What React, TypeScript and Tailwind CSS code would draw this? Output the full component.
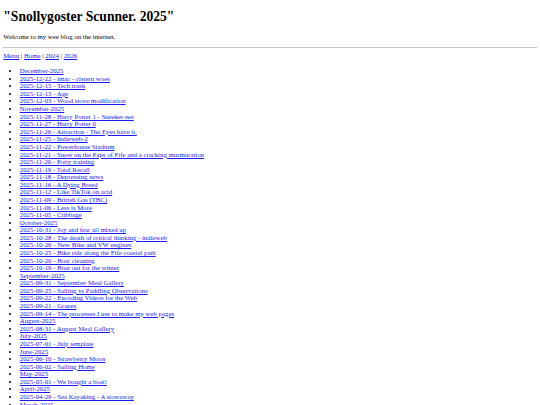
import React from "react";

const items: string[] = [
  "December-2025",
  "2025-12-22 - imac - cistern woes",
  "2025-12-15 - Tech trash",
  "2025-12-13 - Age",
  "2025-12-03 - Wood stove modification",
  "November-2025",
  "2025-11-28 - Harry Potter 1 - Sneeker-net",
  "2025-11-27 - Harry Potter 0",
  "2025-11-26 - Attraction - The Eyes have it.",
  "2025-11-25 - Indieweb-2",
  "2025-11-22 - Powerhouse Stadium",
  "2025-11-21 - Snow on the Paps of Fife and a cracking murmuration",
  "2025-11-20 - Potty training",
  "2025-11-19 - Total Recall",
  "2025-11-18 - Depressing news",
  "2025-11-16 - A Dying Breed",
  "2025-11-12 - Like TikTok on acid",
  "2025-11-09 - British Gas (TBC)",
  "2025-11-06 - Less is More",
  "2025-11-05 - Cribbage",
  "October-2025",
  "2025-10-31 - Joy and fear all mixed up",
  "2025-10-28 - The death of critical thinking - indieweb",
  "2025-10-26 - New Bike and VW engines",
  "2025-10-25 - Bike ride along the Fife coastal path",
  "2025-10-20 - Boat cleaning",
  "2025-10-19 - Boat out for the winter",
  "September-2025",
  "2025-09-31 - September Meal Gallery",
  "2025-09-25 - Sailing vs Paddling Observations",
  "2025-09-22 - Encoding Videos for the Web",
  "2025-09-21 - Grapes",
  "2025-09-14 - The processes I use to make my web pages",
  "August-2025",
  "2025-08-31 - August Meal Gallery",
  "July-2025",
  "2025-07-01 - July template",
  "June-2025",
  "2025-06-10 - Strawberry Moon",
  "2025-06-02 - Sailing Home",
  "May-2025",
  "2025-05-01 - We bought a boat!",
  "April-2025",
  "2025-04-29 - Sea Kayaking - A stowaway",
  "March-2025",
];

export default function App() {
  return (
    <div className="bg-white text-black [font-family:Liberation_Serif,serif] text-[6.8px] leading-[7.58px] px-[3.3px] pt-[9px] h-[405px] overflow-hidden">
      <h1 className="text-[13.6px] leading-[15.4px] font-bold">"Snollygoster Scunner. 2025"</h1>
      <p className="mt-[8.6px]">Welcome to my wee blog on the internet.</p>
      <hr className="mt-[6.8px] border-t border-[#c8c8c8]" />
      <div className="mt-[4px]">
        <a href="#" className="text-[#1a1ae8] underline">Menu</a> |{" "}
        <a href="#" className="text-[#1a1ae8] underline">Home</a> |{" "}
        <a href="#" className="text-[#1a1ae8] underline">2024</a> |{" "}
        <a href="#" className="text-[#1a1ae8] underline">2026</a>
      </div>
      <ul className="mt-[7.2px] pl-[16.5px] list-disc">
        {items.map((t) => (
          <li key={t}>
            <a href="#" className="text-[#1a1ae8] underline">{t}</a>
          </li>
        ))}
      </ul>
    </div>
  );
}
